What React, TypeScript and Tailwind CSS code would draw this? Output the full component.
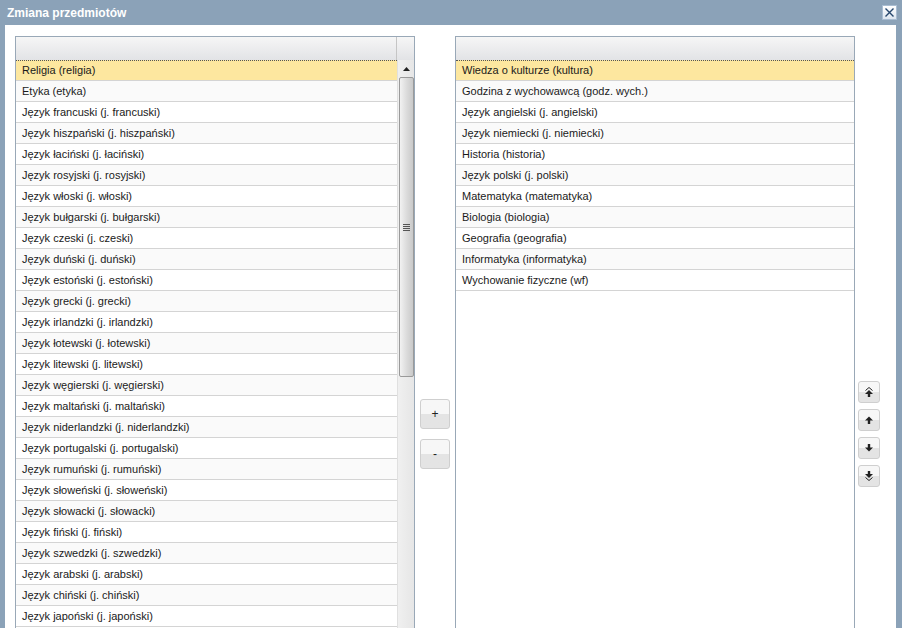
import React from 'react';

const leftItems = [
  'Religia (religia)',
  'Etyka (etyka)',
  'Język francuski (j. francuski)',
  'Język hiszpański (j. hiszpański)',
  'Język łaciński (j. łaciński)',
  'Język rosyjski (j. rosyjski)',
  'Język włoski (j. włoski)',
  'Język bułgarski (j. bułgarski)',
  'Język czeski (j. czeski)',
  'Język duński (j. duński)',
  'Język estoński (j. estoński)',
  'Język grecki (j. grecki)',
  'Język irlandzki (j. irlandzki)',
  'Język łotewski (j. łotewski)',
  'Język litewski (j. litewski)',
  'Język węgierski (j. węgierski)',
  'Język maltański (j. maltański)',
  'Język niderlandzki (j. niderlandzki)',
  'Język portugalski (j. portugalski)',
  'Język rumuński (j. rumuński)',
  'Język słoweński (j. słoweński)',
  'Język słowacki (j. słowacki)',
  'Język fiński (j. fiński)',
  'Język szwedzki (j. szwedzki)',
  'Język arabski (j. arabski)',
  'Język chiński (j. chiński)',
  'Język japoński (j. japoński)',
];

const rightItems = [
  'Wiedza o kulturze (kultura)',
  'Godzina z wychowawcą (godz. wych.)',
  'Język angielski (j. angielski)',
  'Język niemiecki (j. niemiecki)',
  'Historia (historia)',
  'Język polski (j. polski)',
  'Matematyka (matematyka)',
  'Biologia (biologia)',
  'Geografia (geografia)',
  'Informatyka (informatyka)',
  'Wychowanie fizyczne (wf)',
];

function Row({ text, idx }: { text: string; idx: number }) {
  const selected = idx === 0;
  return (
    <div
      className={`h-[21px] shrink-0 flex items-center pl-[6px] border-b border-[#d4d4d4] whitespace-nowrap ${
        selected ? 'bg-[#fde79f] border-t border-t-[#555]' : idx % 2 ? 'bg-[#fafafa] pt-[1px]' : 'bg-white pt-[1px]'
      }`}
      style={selected ? { borderTopStyle: 'dotted' } : undefined}
    >
      {text}
    </div>
  );
}

function Header({ withScroll }: { withScroll?: boolean }) {
  return (
    <div className="h-[23px] flex bg-gradient-to-b from-[#f6f6f6] to-[#e2e3e6] shrink-0">
      <div className="flex-1" />
      {withScroll && <div className="w-[18px] border-l border-[#c5c5c5]" />}
    </div>
  );
}

function SmallBtn({ children }: { children: React.ReactNode }) {
  return (
    <div className="w-[22px] h-[22px] rounded-[3px] border border-[#cfcfcf] bg-gradient-to-b from-[#f7f7f7] from-50% to-[#e4e4e4] to-50% flex items-center justify-center">
      <svg width="12" height="12" viewBox="0 0 12 12">{children}</svg>
    </div>
  );
}

export default function App() {
  return (
    <div
      className="w-[902px] h-[628px] overflow-hidden flex flex-col bg-[#8ba2b8] text-[11px] text-[#1a1a1a]"
      style={{ fontFamily: '"Liberation Sans", Arial, sans-serif' }}
    >
      <div className="h-[25px] shrink-0 flex items-center justify-between pl-[7px] pr-[5px]">
        <span className="text-white font-bold text-[12px]">Zmiana przedmiotów</span>
        <div className="w-[15px] h-[15px] bg-gradient-to-b from-white to-[#dde6f0] border border-[#a9bdd2] flex items-center justify-center">
          <svg width="11" height="11" viewBox="0 0 11 11">
            <path d="M1.5 1.5 L9.5 9.5 M9.5 1.5 L1.5 9.5" stroke="#26476d" strokeWidth="1.4" />
          </svg>
        </div>
      </div>
      <div className="flex-1 bg-white ml-[5px] mr-[6px] flex pt-[11px] pl-[10px] gap-[5px] overflow-hidden">
        {/* left list */}
        <div className="w-[400px] h-[800px] shrink-0 border border-[#99a8b7] flex flex-col bg-white">
          <Header withScroll />
          <div className="flex flex-1">
            <div className="flex-1 flex flex-col">
              {leftItems.map((t, i) => (
                <Row key={t} text={t} idx={i} />
              ))}
            </div>
            <div className="w-[17px] bg-gradient-to-r from-[#f0f0f0] to-[#e6e6e6] border-l border-[#e0e0e0] flex flex-col items-center">
              <div className="h-[17px] w-full flex items-center justify-center">
                <svg width="7" height="4" viewBox="0 0 7 4">
                  <path d="M0 4 L3.5 0 L7 4 Z" fill="#222" />
                </svg>
              </div>
              <div className="w-[15px] h-[300px] rounded-[2px] border border-[#9a9a9a] bg-gradient-to-r from-[#f2f2f2] via-[#dcdcdc] to-[#c9c9c9] flex items-center justify-center">
                <div className="flex flex-col gap-[1px]">
                  <div className="w-[7px] h-px bg-[#555]" />
                  <div className="w-[7px] h-px bg-[#555]" />
                  <div className="w-[7px] h-px bg-[#555]" />
                  <div className="w-[7px] h-px bg-[#555]" />
                </div>
              </div>
            </div>
          </div>
        </div>

        {/* middle buttons */}
        <div className="w-[30px] shrink-0 flex flex-col gap-[10px] pt-[363px]">
          <div className="w-[30px] h-[30px] rounded-[3px] border border-[#cfcfcf] bg-gradient-to-b from-[#f7f7f7] from-50% to-[#e4e4e4] to-50% flex items-center justify-center text-[12px] text-[#222]">
            +
          </div>
          <div className="w-[30px] h-[30px] rounded-[3px] border border-[#cfcfcf] bg-gradient-to-b from-[#f7f7f7] from-50% to-[#e4e4e4] to-50% flex items-center justify-center text-[12px] text-[#222]">
            -
          </div>
        </div>

        {/* right list */}
        <div className="w-[400px] h-[800px] shrink-0 border border-[#99a8b7] flex flex-col bg-white">
          <Header />
          <div className="flex flex-col">
            {rightItems.map((t, i) => (
              <Row key={t} text={t} idx={i} />
            ))}
          </div>
        </div>

        {/* right buttons */}
        <div className="shrink-0 flex flex-col gap-[6px] pt-[345px] -ml-[2px]">
          <SmallBtn>
            <path d="M2.5 4.5 L6 1.5 L9.5 4.5" stroke="#222" strokeWidth="1" fill="none" />
            <path d="M6 4 L10 8 L7.2 8 L7.2 11 L4.8 11 L4.8 8 L2 8 Z" fill="#222" />
          </SmallBtn>
          <SmallBtn>
            <path d="M6 2.5 L10 6.5 L7.2 6.5 L7.2 10 L4.8 10 L4.8 6.5 L2 6.5 Z" fill="#222" />
          </SmallBtn>
          <SmallBtn>
            <path d="M6 9.5 L10 5.5 L7.2 5.5 L7.2 2 L4.8 2 L4.8 5.5 L2 5.5 Z" fill="#222" />
          </SmallBtn>
          <SmallBtn>
            <path d="M6 8 L10 4 L7.2 4 L7.2 1 L4.8 1 L4.8 4 L2 4 Z" fill="#222" />
            <path d="M2.5 7.5 L6 10.5 L9.5 7.5" stroke="#222" strokeWidth="1" fill="none" />
          </SmallBtn>
        </div>
      </div>
    </div>
  );
}
